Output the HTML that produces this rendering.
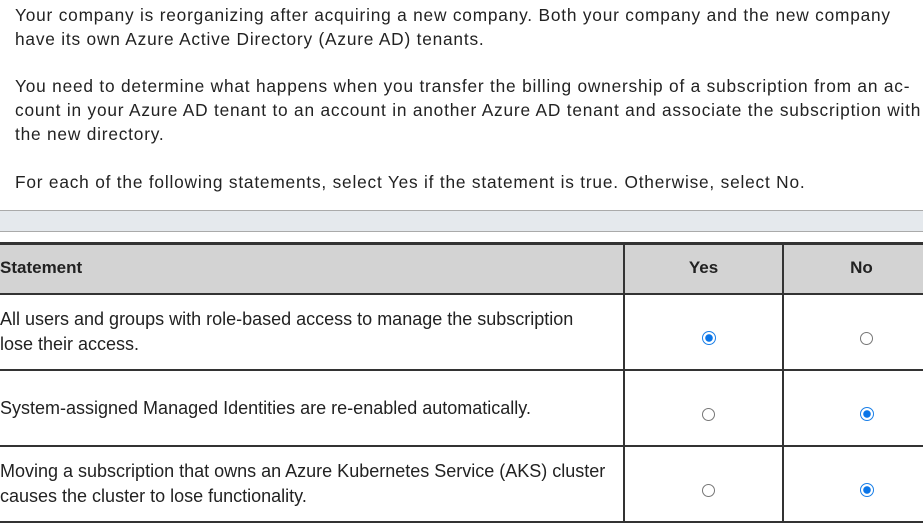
<!DOCTYPE html>
<html><head><style>
body{margin:0;width:923px;height:520px;overflow:hidden;background:#fff;font-family:"Liberation Sans",sans-serif;}
.p{position:absolute;left:15px;width:905px;font-size:17.3px;letter-spacing:0.8px;line-height:24px;color:#222;white-space:nowrap;}
.band{position:absolute;left:0;top:210px;width:923px;height:20px;background:#e5e9ed;border-top:1px solid #aaa;border-bottom:1px solid #aaa;}
table{position:absolute;left:0;top:242px;width:941px;border-collapse:collapse;table-layout:fixed;}
td,th{border:2px solid #333;font-size:18px;color:#222;padding:0;white-space:nowrap;}
th{background:#d3d3d3;height:46px;border-top:3px solid #333;font-size:17px;padding-bottom:2px;}
th:first-child{text-align:left;border-left:none;}
td:first-child{border-left:none;line-height:25px;}
td{height:74px;}
.r{text-align:center;padding-left:10px;}
.o{display:inline-block;width:13px;height:13px;border:1px solid #777;border-radius:50%;vertical-align:middle;margin-top:12px;box-sizing:border-box;}
.s{border:1.5px solid #1a7fe8;background:radial-gradient(circle,#0a75e8 3.5px,#fff 4px);width:14px;height:14px;}
</style></head><body>
<div class="p" style="top:3px">Your company is reorganizing after acquiring a new company. Both your company and the new company<br>have its own Azure Active Directory (Azure AD) tenants.</div>
<div class="p" style="top:74px">You need to determine what happens when you transfer the billing ownership of a subscription from an ac-<br>count in your Azure AD tenant to an account in another Azure AD tenant and associate the subscription with<br>the new directory.</div>
<div class="p" style="top:170px">For each of the following statements, select Yes if the statement is true. Otherwise, select No.</div>
<div class="band"></div>
<table>
<colgroup><col style="width:624px"><col style="width:159px"><col></colgroup>
<tr><th>Statement</th><th>Yes</th><th>No</th></tr>
<tr><td>All users and groups with role-based access to manage the subscription<br>lose their access.</td><td class="r"><span class="o s"></span></td><td class="r"><span class="o"></span></td></tr>
<tr><td>System-assigned Managed Identities are re-enabled automatically.</td><td class="r"><span class="o"></span></td><td class="r"><span class="o s"></span></td></tr>
<tr><td>Moving a subscription that owns an Azure Kubernetes Service (AKS) cluster<br>causes the cluster to lose functionality.</td><td class="r"><span class="o"></span></td><td class="r"><span class="o s"></span></td></tr>
</table>
</body></html>
